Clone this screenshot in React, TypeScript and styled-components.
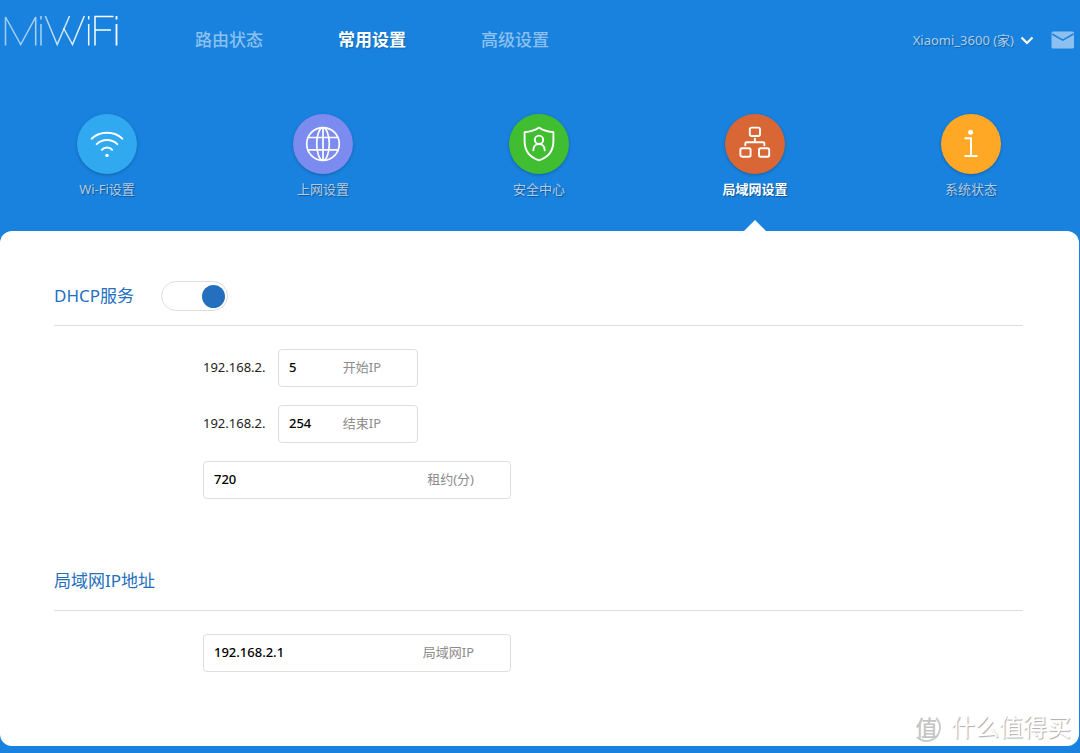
import React, { useState } from "react";
import styled, { createGlobalStyle } from "styled-components";

const GlobalStyle = createGlobalStyle`
  *, *::before, *::after { box-sizing: border-box; }
  body {
    margin: 0;
    background: #1882de;
    font-family: "Noto Sans", "Noto Sans CJK SC", sans-serif;
    font-size: 13px;
    line-height: 20px;
    color: #222;
  }
  input, select, button { font: inherit; }
`;

const Page = styled.div`
  display: flex;
  flex-direction: column;
  min-height: 100vh;
  padding: 0 1px 8px 0;
`;

const Header = styled.header`
  display: flex;
  align-items: center;
  height: 79px;
  padding: 0 5px 0 4px;
`;

const LogoLink = styled.a`
  display: block;
  align-self: flex-start;
  width: 116px;
  height: 34px;
  margin: 14px 75px 0 0;
`;

const MainNav = styled.nav`
  display: flex;
  flex: 1;
  gap: 75px;
`;

const MainLink = styled.a<{ $active?: boolean }>`
  color: ${(p) => (p.$active ? "#fff" : "#8cc0ee")};
  font-size: 17px;
  font-weight: ${(p) => (p.$active ? 700 : 500)};
  line-height: 24px;
  text-decoration: none;
  text-shadow: ${(p) => (p.$active ? "1px 1px 1px rgba(0, 0, 0, 0.2)" : "none")};
`;

const DevicePicker = styled.div`
  display: grid;
  align-items: center;
  margin-right: 17px;

  > * { grid-area: 1 / 1; }
  > svg { justify-self: end; pointer-events: none; }
`;

const DeviceSelect = styled.select`
  appearance: none;
  field-sizing: content;
  padding: 0 20px 0 0;
  border: 0;
  background: transparent;
  color: #b0cdec;
  text-shadow: 1px 1px 1px rgba(0, 0, 0, 0.3);
  cursor: pointer;
`;

const MailButton = styled.button`
  display: block;
  padding: 0;
  border: 0;
  background: none;
  line-height: 0;
  cursor: pointer;
`;

const SubNav = styled.nav`
  display: grid;
  grid-template-columns: repeat(5, 1fr);
  height: 152px;
  margin-left: -1px;
  padding-top: 35px;
`;

const SubLink = styled.a<{ $active?: boolean }>`
  position: relative;
  display: flex;
  flex-direction: column;
  align-items: center;
  gap: 5px;
  color: ${(p) => (p.$active ? "#fff" : "#b3c9e4")};
  font-weight: ${(p) => (p.$active ? 700 : 400)};
  text-decoration: none;
  text-shadow: 1px 1px 1px rgba(0, 0, 0, 0.35);

  &::after {
    content: "";
    display: ${(p) => (p.$active ? "block" : "none")};
    position: absolute;
    bottom: 0;
    border: 11px solid transparent;
    border-top: 0;
    border-bottom-color: #fff;
  }
`;

const Disc = styled.span<{ $color: string }>`
  display: grid;
  place-items: center;
  width: 60px;
  height: 60px;
  border-radius: 50%;
  background: ${(p) => p.$color};
  box-shadow: 0 1px 3px rgba(0, 0, 0, 0.25);
`;

const Panel = styled.main`
  position: relative;
  flex: 1;
  padding: 34px 56px 74px 54px;
  border-radius: 12px;
  background: #fff;
`;

const Section = styled.section`
  & + & { margin-top: 51px; }
`;

const SectionHead = styled.div`
  display: flex;
  align-items: center;
  gap: 27px;
  height: 61px;
  padding-top: 2px;
  border-bottom: 1px solid #dedede;
`;

const SectionTitle = styled.h2`
  margin: 0;
  color: #2470be;
  font-size: 17px;
  font-weight: 400;
  line-height: 24px;
`;

const Toggle = styled.input`
  appearance: none;
  display: flex;
  align-items: center;
  width: 67px;
  height: 30px;
  margin: 0;
  padding: 0 2px;
  border: 1px solid #dedede;
  border-radius: 15px;
  background: #fff;
  cursor: pointer;

  &::before {
    content: "";
    width: 23px;
    height: 23px;
    border-radius: 50%;
    background: #bbb;
  }
  &:checked { justify-content: flex-end; }
  &:checked::before { background: #2470be; }
`;

const Fields = styled.div`
  display: grid;
  justify-items: start;
  gap: 18px;
  padding: 23px 0 0 149px;
`;

const FieldRow = styled.div`
  display: flex;
`;

const Prefix = styled.span`
  width: 75px;
  line-height: 36px;
`;

const FieldBox = styled.div<{ $wide?: boolean }>`
  display: flex;
  align-items: center;
  width: ${(p) => (p.$wide ? 308 : 140)}px;
  height: 38px;
  padding: 0 36px 2px 10px;
  border: 1px solid #dedede;
  border-radius: 4px;
`;

const FieldInput = styled.input`
  flex: 1;
  min-width: 0;
  padding: 0;
  border: 0;
  outline: 0;
  background: transparent;
  color: #000;
  font-weight: 500;
`;

const FieldLabel = styled.label`
  color: #8c8c8c;
`;

const Watermark = styled.div`
  position: absolute;
  right: 8px;
  bottom: 0;
  display: flex;
  align-items: center;
  gap: 10px;
  height: 38px;
  color: #fff;
  font-size: 24px;
  line-height: 36px;
  text-shadow: 1px 1px 1px #aaa;
`;

const Seal = styled.span`
  display: grid;
  place-items: center;
  width: 29px;
  height: 29px;
  border: 2px solid transparent;
  border-right-color: #ccc;
  border-bottom-color: #ccc;
  border-radius: 50%;
  color: #c4c4c4;
  font-size: 22px;
  font-weight: 500;
  line-height: 24px;
  text-shadow: none;
`;

const Logo = () => (
  <svg width="116" height="34" viewBox="0 0 116 34" fill="none" stroke="url(#logo-fade)" strokeWidth="1.5" role="img" aria-label="MiWiFi">
    <defs>
      <linearGradient id="logo-fade" gradientUnits="userSpaceOnUse" x1="0" y1="0" x2="116" y2="0">
        <stop offset="0" stopColor="#fff" stopOpacity=".6" />
        <stop offset=".35" stopColor="#fff" stopOpacity=".65" />
        <stop offset=".8" stopColor="#fff" />
      </linearGradient>
    </defs>
    <polyline points="1.5,31.5 1.5,3 16.7,30.5 31.7,3 31.7,31.5" />
    <polyline points="37,10 37,31.5" />
    <polyline points="37,2 37,5.5" />
    <polyline points="41.3,2 53.2,30.5 65.5,2" />
    <polyline points="59.5,14 68.5,30.5 80.3,2" />
    <polyline points="84.7,10 84.7,31.5" />
    <polyline points="84.7,2 84.7,5.5" />
    <polyline points="109.5,2.5 91,2.5 91,31.5" />
    <polyline points="91,16 107,16" />
    <polyline points="112.5,10 112.5,31.5" strokeWidth="1.8" />
    <polyline points="112.5,2 112.5,5.5" strokeWidth="1.8" />
  </svg>
);

const iconProps = {
  width: 36,
  height: 36,
  viewBox: "0 0 36 36",
  fill: "none",
  stroke: "#fff",
  strokeWidth: 1.9,
  strokeLinecap: "round" as const,
  strokeLinejoin: "round" as const,
  "aria-hidden": true,
};

const WifiIcon = () => (
  <svg {...iconProps}>
    <path d="M2.7 12.7C10.5 4.8 25.5 4.8 33.3 12.7" />
    <path d="M7.7 18.2C13 12.6 23 12.6 28.3 18.2" />
    <path d="M12.8 23.8C15.3 20.8 20.7 20.8 23.2 23.8" />
    <circle cx="18" cy="29.4" r="1.7" fill="#fff" stroke="none" />
  </svg>
);

const GlobeIcon = () => (
  <svg {...iconProps} strokeWidth={1.7}>
    <circle cx="18" cy="18" r="16.3" />
    <ellipse cx="18" cy="18" rx="6.3" ry="16.3" />
    <path d="M18 1.7V34.3M3.2 11.5H32.8M3.2 23.8H32.8" strokeLinecap="butt" />
  </svg>
);

const ShieldIcon = () => (
  <svg {...iconProps}>
    <path d="M18 1.6C13.8 4.7 8.7 5.9 3.6 6.2V15C3.6 24.6 8.4 31.2 18 34.3C27.6 31.2 32.4 24.6 32.4 15V6.2C27.3 5.9 22.2 4.7 18 1.6Z" />
    <circle cx="18" cy="13.8" r="4.2" />
    <path d="M12.3 24.2C12.3 20.3 14.7 18 18 18S23.7 20.3 23.7 24.2" />
  </svg>
);

const LanIcon = () => (
  <svg {...iconProps}>
    <rect x="12.8" y="1.6" width="10.2" height="8.4" rx="1.7" />
    <rect x="3.4" y="22.3" width="10.2" height="8.4" rx="1.7" />
    <rect x="22" y="22.3" width="10.2" height="8.4" rx="1.7" />
    <path d="M17.9 12.6V16.2M8.3 19.3V17.6Q8.3 16.2 9.7 16.2H26Q27.4 16.2 27.4 17.6V19.3" />
  </svg>
);

const InfoIcon = () => (
  <svg {...iconProps} strokeLinecap="butt" strokeLinejoin="miter">
    <circle cx="17.6" cy="6.3" r="2.5" fill="#fff" stroke="none" />
    <path d="M11.6 12.3H18V30M11.4 30H24.6" />
  </svg>
);

const subItems = [
  { text: "Wi-Fi设置", color: "#30a9f0", Icon: WifiIcon },
  { text: "上网设置", color: "#7c8bef", Icon: GlobeIcon },
  { text: "安全中心", color: "#40bd30", Icon: ShieldIcon },
  { text: "局域网设置", color: "#d96735", Icon: LanIcon, active: true },
  { text: "系统状态", color: "#ffa826", Icon: InfoIcon },
];

interface FieldProps {
  id: string;
  label: string;
  initial: string;
  prefix?: string;
}

function Field({ id, label, initial, prefix }: FieldProps) {
  return (
    <FieldRow>
      {prefix && <Prefix>{prefix}</Prefix>}
      <FieldBox $wide={!prefix}>
        <FieldInput id={id} type="text" defaultValue={initial} />
        <FieldLabel htmlFor={id}>{label}</FieldLabel>
      </FieldBox>
    </FieldRow>
  );
}

export default function App() {
  const [dhcp, setDhcp] = useState(true);
  return (
    <>
      <GlobalStyle />
      <Page>
        <Header>
          <LogoLink href="#"><Logo /></LogoLink>
          <MainNav>
            <MainLink href="#status">路由状态</MainLink>
            <MainLink href="#settings" $active>常用设置</MainLink>
            <MainLink href="#advanced">高级设置</MainLink>
          </MainNav>
          <DevicePicker>
            <DeviceSelect aria-label="Xiaomi_3600">
              <option>Xiaomi_3600 (家)</option>
            </DeviceSelect>
            <svg width="14" height="10" viewBox="0 0 14 10" fill="none" stroke="#fff" strokeWidth="2.2" aria-hidden="true">
              <path d="M1.5 2.5L7 8L12.5 2.5" />
            </svg>
          </DevicePicker>
          <MailButton type="button" aria-label="Mail">
            <svg width="23" height="18" viewBox="0 0 23 18" aria-hidden="true">
              <rect x=".5" y=".5" width="22.5" height="17" rx="1.5" fill="#8cc0ee" />
              <path d="M1 3L11.8 9.2L22.5 3" fill="none" stroke="#1882de" strokeWidth="1.5" />
            </svg>
          </MailButton>
        </Header>
        <SubNav>
          {subItems.map(({ text, color, Icon, active }) => (
            <SubLink key={text} href="#" $active={active}>
              <Disc $color={color}><Icon /></Disc>
              {text}
            </SubLink>
          ))}
        </SubNav>
        <Panel>
          <Section>
            <SectionHead>
              <SectionTitle><label htmlFor="dhcp">DHCP服务</label></SectionTitle>
              <Toggle id="dhcp" type="checkbox" checked={dhcp} onChange={(e) => setDhcp(e.target.checked)} />
            </SectionHead>
            <Fields>
              <Field id="start" prefix="192.168.2." initial="5" label="开始IP" />
              <Field id="end" prefix="192.168.2." initial="254" label="结束IP" />
              <Field id="lease" initial="720" label="租约(分)" />
            </Fields>
          </Section>
          <Section>
            <SectionHead>
              <SectionTitle>局域网IP地址</SectionTitle>
            </SectionHead>
            <Fields>
              <Field id="lan" initial="192.168.2.1" label="局域网IP" />
            </Fields>
          </Section>
          <Watermark>
            <Seal>值</Seal>
            <span>什么值得买</span>
          </Watermark>
        </Panel>
      </Page>
    </>
  );
}
